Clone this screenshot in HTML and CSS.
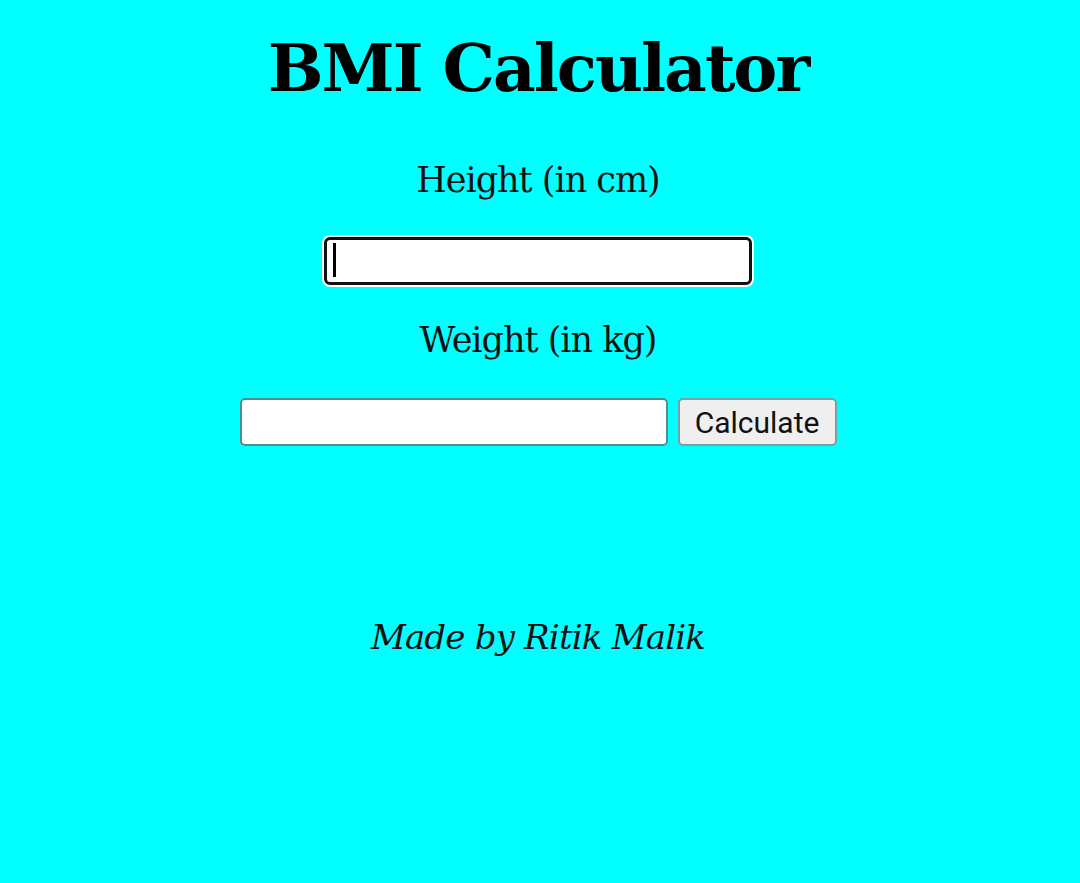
FILE: index.html
```html
<!DOCTYPE html>
<html>
<head>
<meta charset="utf-8">
<title>BMI Calculator</title>
<link rel="stylesheet" href="styles.css">
</head>
<body>
<main class="page">
  <h1 class="title">BMI Calculator</h1>
  <label class="label" for="height">Height (in cm)</label>
  <span class="field-wrap">
    <input class="field field-focused" id="height" type="text">
  </span>
  <label class="label label-weight" for="weight">Weight (in kg)</label>
  <div class="row">
    <input class="field" id="weight" type="text">
    <button class="btn" type="button">Calculate</button>
  </div>
  <p class="credit">Made by Ritik Malik</p>
</main>
</body>
</html>
```
FILE: styles.css
```css
html, body {
  margin: 0;
  padding: 0;
  background: #00ffff;
  height: 100%;
}
.page {
  display: flex;
  flex-direction: column;
  align-items: center;
  padding-right: 4px;
  font-family: "DejaVu Serif", "Liberation Serif", serif;
  color: #000;
}
.title {
  margin: 26px 0 0;
  font-size: 66px;
  line-height: 84px;
  letter-spacing: -2px;
  font-weight: bold;
}
.label {
  margin-top: 48px;
  font-size: 35px;
  line-height: 44px;
  letter-spacing: -1px;
  color: #111;
}
.label-weight {
  margin-top: 33px;
}
.field-wrap {
  position: relative;
  margin-top: 35px;
  display: block;
}
.field-wrap::after {
  content: "";
  position: absolute;
  left: 9px;
  top: 6px;
  width: 3px;
  height: 34px;
  background: #000;
}
.field {
  box-sizing: border-box;
  width: 428px;
  height: 48px;
  margin: 0;
  padding: 0 8px;
  border: 2px solid #4d8f8f;
  border-radius: 5px;
  background: #fff;
  font-size: 28px;
  outline: none;
}
.field-focused {
  border: 3px solid #111;
  border-radius: 6px;
  box-shadow: 0 0 0 2px #fff;
}
.row {
  display: flex;
  gap: 10px;
  margin-top: 36px;
}
.btn {
  box-sizing: border-box;
  width: 159px;
  height: 48px;
  margin: 0;
  padding: 0;
  border: 2px solid #7e9f9f;
  border-radius: 5px;
  background: #efefef;
  font-family: Roboto, "Liberation Sans", sans-serif;
  font-size: 30px;
  color: #111;
}
.credit {
  margin: 169px 0 0;
  font-size: 34px;
  line-height: 44px;
  letter-spacing: -0.8px;
  font-style: italic;
  color: #111;
}
```
